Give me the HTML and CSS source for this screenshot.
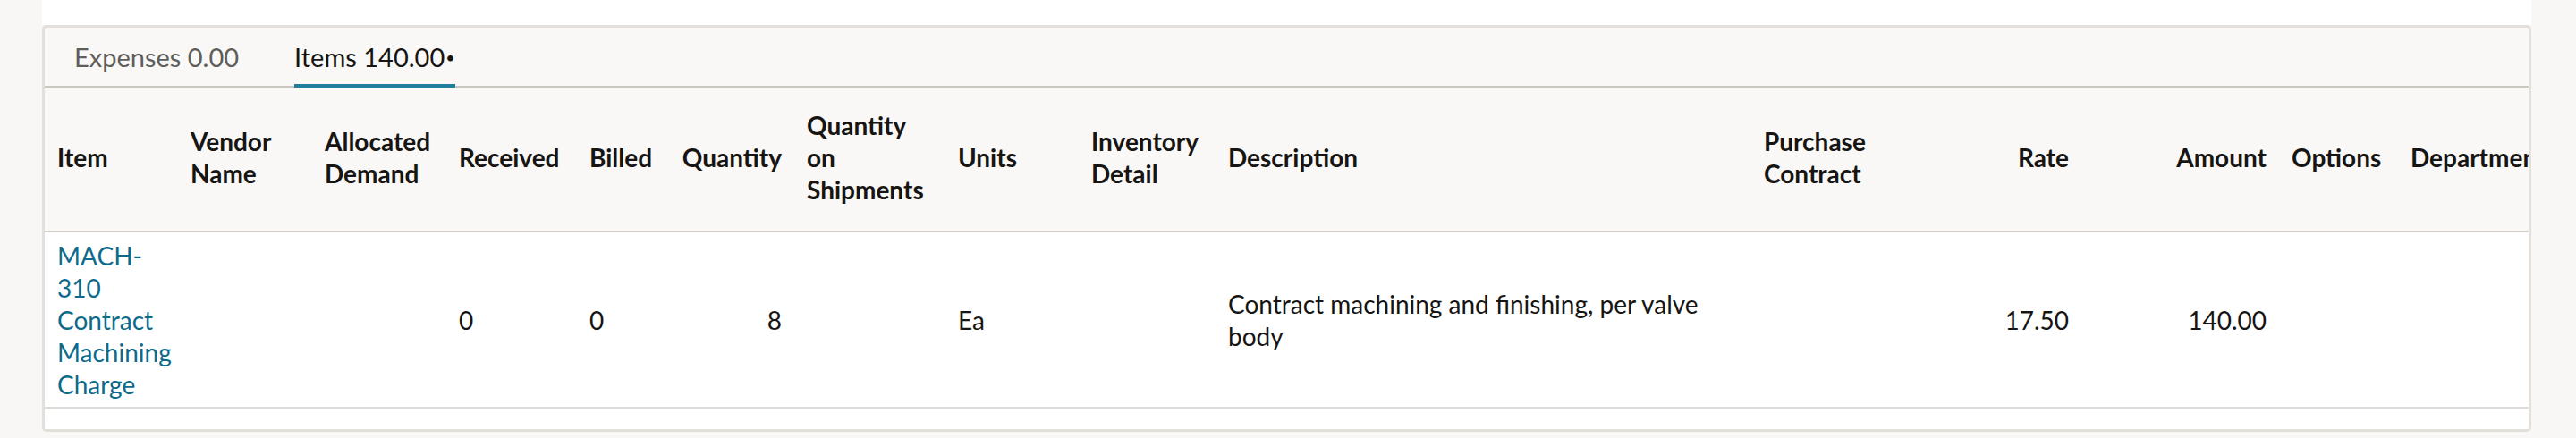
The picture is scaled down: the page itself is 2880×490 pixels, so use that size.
FILE: index.html
```html
<!DOCTYPE html>
<html lang="en">
<head>
    <meta charset="UTF-8">
    <meta name="viewport" content="width=device-width, initial-scale=1.0">
    <title>Bill - Items</title>
    <link rel="stylesheet" href="styles.css">
</head>
<body>
    <div class="page">
        <div class="top-gap"></div>

        <div class="sublist">
            <div class="tabs">
                <a href="#" class="tab">Expenses 0.00</a>
                <a href="#" class="tab active">Items 140.00<span class="dirty">•</span></a>
            </div>

            <div class="grid-wrap">
                <table class="grid">
                    <colgroup>
                        <col class="c-item">
                        <col class="c-vendor">
                        <col class="c-alloc">
                        <col class="c-received">
                        <col class="c-billed">
                        <col class="c-qty">
                        <col class="c-qtyship">
                        <col class="c-units">
                        <col class="c-inv">
                        <col class="c-desc">
                        <col class="c-contract">
                        <col class="c-rate">
                        <col class="c-amount">
                        <col class="c-options">
                        <col class="c-dept">
                    </colgroup>
                    <thead>
                        <tr>
                            <th class="first">Item</th>
                            <th>Vendor Name</th>
                            <th>Allocated Demand</th>
                            <th>Received</th>
                            <th>Billed</th>
                            <th class="num">Quantity</th>
                            <th>Quantity on Shipments</th>
                            <th>Units</th>
                            <th>Inventory Detail</th>
                            <th>Description</th>
                            <th>Purchase Contract</th>
                            <th class="num">Rate</th>
                            <th class="num">Amount</th>
                            <th>Options</th>
                            <th>Department</th>
                        </tr>
                    </thead>
                    <tbody>
                        <tr>
                            <td class="first"><a href="#" class="item-link">MACH-310 Contract Machining Charge</a></td>
                            <td></td>
                            <td></td>
                            <td>0</td>
                            <td>0</td>
                            <td class="num">8</td>
                            <td></td>
                            <td>Ea</td>
                            <td></td>
                            <td>Contract machining and finishing, per valve body</td>
                            <td></td>
                            <td class="num">17.50</td>
                            <td class="num">140.00</td>
                            <td></td>
                            <td></td>
                        </tr>
                    </tbody>
                </table>
            </div>

            <div class="grid-footer"></div>
        </div>
    </div>
</body>
</html>
```

FILE: styles.css
```css
* {
    padding: 0;
    margin: 0;
    box-sizing: border-box;
}

body {
    height: 100vh;
    background: #f8f7f5;
    overflow: hidden;
    font-family: Lato, "Open Sans", sans-serif;
    font-size: 28px;
    color: #161513;
}

.page {
    margin: 0 50px 0 47px;
}

.top-gap {
    height: 28px;
    background: #fff;
}

.sublist {
    border: 3px solid #e3e0db;
    border-radius: 5px;
    background: #f9f8f6;
    overflow: hidden;
}

/* tab strip */
.tabs {
    display: flex;
    gap: 62px;
    height: 67px;
    padding-left: 33px;
    border-bottom: 2px solid #cbc8c1;
    font-size: 29px;
}

.tab {
    display: flex;
    align-items: center;
    height: 67px;
    margin-bottom: -2px;
    padding-top: 2px;
    border-bottom: 4px solid transparent;
    color: #5f5e5a;
    text-decoration: none;
    white-space: nowrap;
}

.tab.active {
    color: #161513;
    border-bottom-color: #227e9e;
}

.tab .dirty {
    font-size: 18px;
    margin-left: 1px;
}

/* line grid */
.grid-wrap {
    overflow: hidden;
}

.grid {
    table-layout: fixed;
    border-collapse: collapse;
    width: 2832px;
    line-height: 36px;
}

.c-item { width: 149px; }
.c-vendor { width: 150px; }
.c-alloc { width: 150px; }
.c-received { width: 146px; }
.c-billed { width: 102px; }
.c-qty { width: 141px; }
.c-qtyship { width: 169px; }
.c-units { width: 149px; }
.c-inv { width: 153px; }
.c-desc { width: 599px; }
.c-contract { width: 190px; }
.c-rate { width: 179px; }
.c-amount { width: 221px; }
.c-options { width: 133px; }
.c-dept { width: 201px; }

.grid th,
.grid td {
    padding: 0 14px;
    text-align: left;
    vertical-align: middle;
}

.grid th {
    height: 161px;
    padding-bottom: 4px;
    font-weight: bold;
    background: #f9f8f6;
    border-bottom: 2px solid #d3d0ca;
}

.grid td {
    height: 197px;
    padding-top: 7px;
    padding-bottom: 7px;
    background: #fff;
    border-bottom: 2px solid #dedbd6;
}

.grid .first {
    padding-right: 4px;
}

.grid .num {
    text-align: right;
}

.item-link {
    color: #0d6a8b;
    text-decoration: none;
}

.grid-footer {
    height: 23px;
    background: #fff;
}
```
